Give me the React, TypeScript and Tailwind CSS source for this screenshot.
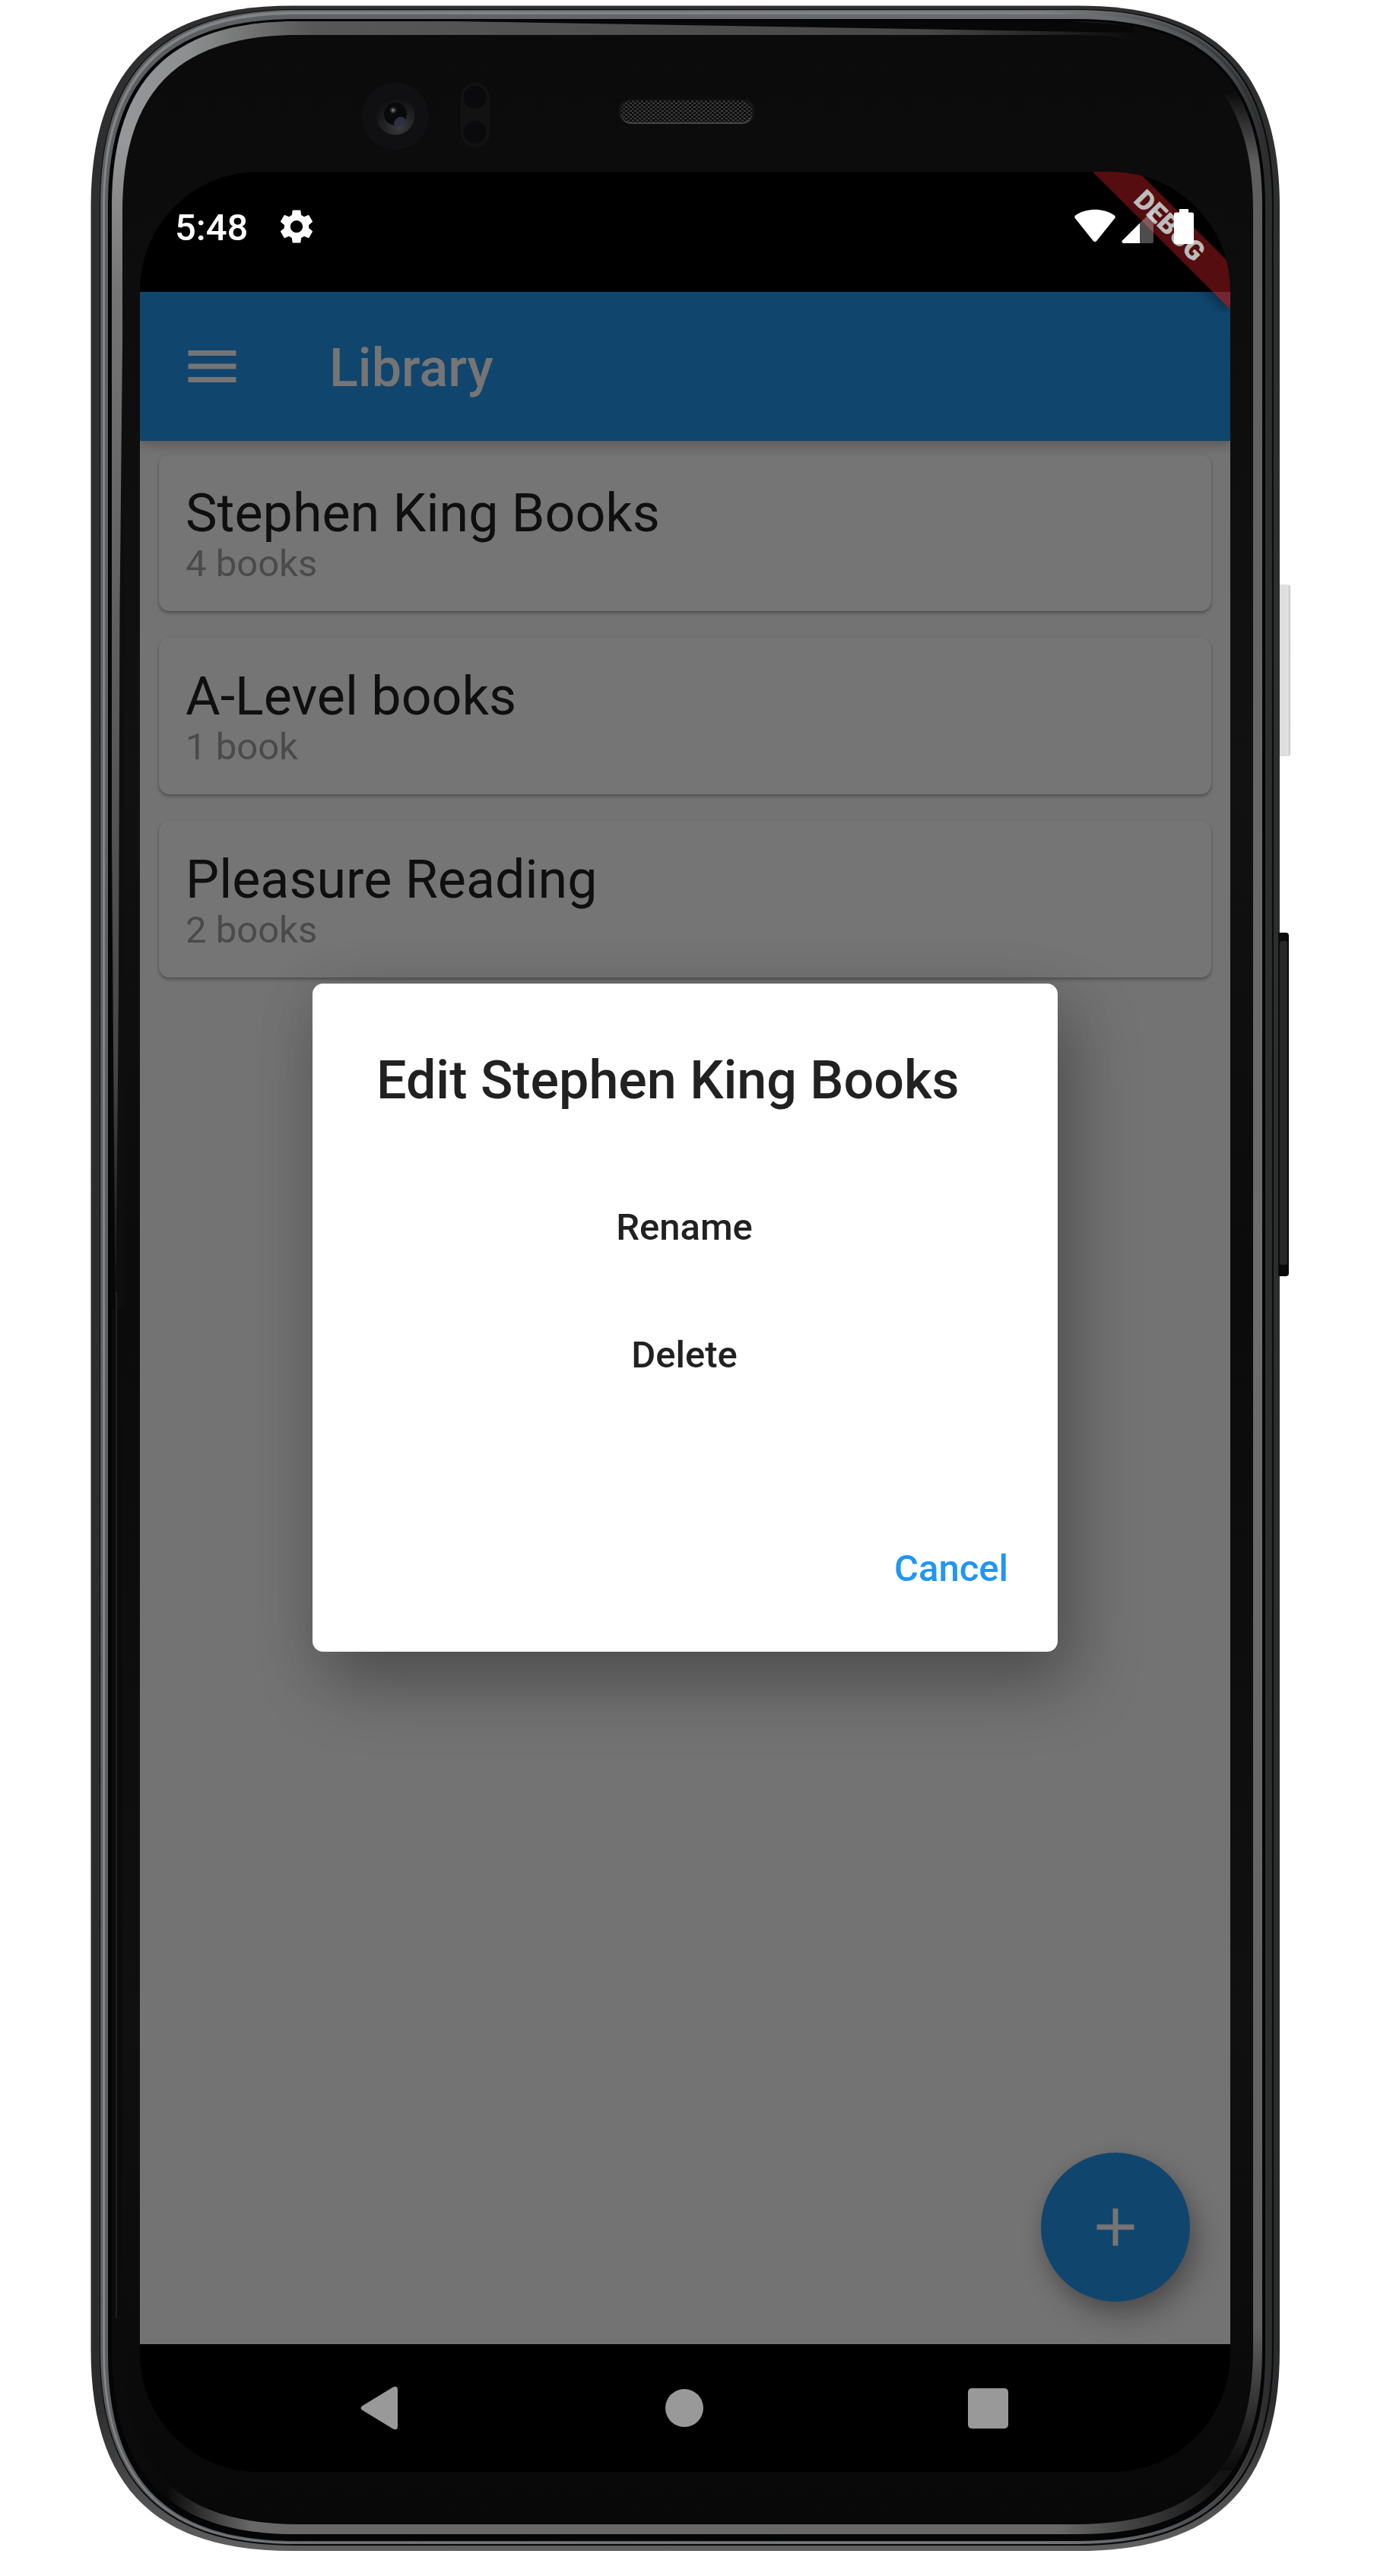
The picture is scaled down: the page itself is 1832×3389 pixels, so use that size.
import { MdSettings, MdMenu, MdAdd } from "react-icons/md";

function rr(l: number, t: number, r: number, b: number, s: number) {
  const k = s * 0.318;
  return `M${l} ${t + s}C${l} ${t + k} ${l + k} ${t} ${l + s} ${t}H${r - s}C${r - k} ${t} ${r} ${t + k} ${r} ${t + s}V${b - s}C${r} ${b - k} ${r - k} ${b} ${r - s} ${b}H${l + s}C${l + k} ${b} ${l} ${b - k} ${l} ${b - s}Z`;
}

function DeviceFrame() {
  return (
    <svg className="absolute left-0 top-0" width="1832" height="3389" viewBox="0 0 1832 3389">
      <defs>
        <linearGradient id="rim" x1="0" y1="0" x2="0" y2="1">
          <stop offset="0" stopColor="#2f2f2f" />
          <stop offset="0.94" stopColor="#2b2b2b" />
          <stop offset="1" stopColor="#606060" />
        </linearGradient>
        <linearGradient id="band" gradientUnits="userSpaceOnUse" x1="118" y1="0" x2="1683" y2="0">
          <stop offset="0" stopColor="#5c5e61" />
          <stop offset="0.85" stopColor="#6b6d70" />
          <stop offset="0.95" stopColor="#4a4c4e" />
          <stop offset="0.99" stopColor="#2a2c2e" />
        </linearGradient>
        <linearGradient id="bandCore" gradientUnits="userSpaceOnUse" x1="118" y1="0" x2="1683" y2="0">
          <stop offset="0" stopColor="#828588" />
          <stop offset="0.8" stopColor="#7f8285" />
          <stop offset="0.97" stopColor="#2f3133" />
          <stop offset="1" stopColor="#2b2d2f" />
        </linearGradient>
        <linearGradient id="glass" x1="0" y1="0" x2="0" y2="1">
          <stop offset="0" stopColor="#0b0b0b" />
          <stop offset="0.3" stopColor="#111111" />
          <stop offset="0.5" stopColor="#0b0b0b" />
          <stop offset="0.8" stopColor="#101010" />
          <stop offset="1" stopColor="#080808" />
        </linearGradient>
        <linearGradient id="bevelTop" gradientUnits="userSpaceOnUse" x1="140" y1="0" x2="1490" y2="0">
          <stop offset="0" stopColor="#98999a" />
          <stop offset="0.08" stopColor="#8d8e8f" />
          <stop offset="0.2" stopColor="#575757" />
          <stop offset="0.8" stopColor="#474747" />
          <stop offset="1" stopColor="#0b0b0b" />
        </linearGradient>
        <linearGradient id="bevelLeft" gradientUnits="userSpaceOnUse" x1="0" y1="180" x2="0" y2="1720">
          <stop offset="0" stopColor="#98999a" />
          <stop offset="0.13" stopColor="#747474" />
          <stop offset="0.5" stopColor="#5a5a5a" />
          <stop offset="0.8" stopColor="#444" />
          <stop offset="1" stopColor="#101010" />
        </linearGradient>
        <linearGradient id="bevelRight" gradientUnits="userSpaceOnUse" x1="0" y1="120" x2="0" y2="3250">
          <stop offset="0" stopColor="#0b0b0b" />
          <stop offset="0.03" stopColor="#5e5e5e" />
          <stop offset="0.5" stopColor="#6e6e6e" />
          <stop offset="0.94" stopColor="#606060" />
          <stop offset="1" stopColor="#0b0b0b" />
        </linearGradient>
        <linearGradient id="bevelBottom" gradientUnits="userSpaceOnUse" x1="220" y1="0" x2="1600" y2="0">
          <stop offset="0" stopColor="#0a0a0a" />
          <stop offset="0.08" stopColor="#686868" />
          <stop offset="0.85" stopColor="#686868" />
          <stop offset="1" stopColor="#141414" />
        </linearGradient>
        <linearGradient id="whiteKey" x1="0" y1="0" x2="1" y2="0">
          <stop offset="0" stopColor="#f4f4f4" />
          <stop offset="0.3" stopColor="#dcdcdc" />
          <stop offset="0.8" stopColor="#e2e2e1" />
          <stop offset="1" stopColor="#c4c4c4" />
        </linearGradient>
        <radialGradient id="lens" cx="0.6" cy="0.8" r="0.8">
          <stop offset="0" stopColor="#3a3b3d" />
          <stop offset="0.5" stopColor="#222224" />
          <stop offset="1" stopColor="#0d0d0f" />
        </radialGradient>
        <radialGradient id="glint">
          <stop offset="0" stopColor="#9a9a9a" />
          <stop offset="1" stopColor="#0a0a0c" stopOpacity="0" />
        </radialGradient>
        <pattern id="mesh" width="6" height="5" patternUnits="userSpaceOnUse">
          <rect width="6" height="5" fill="#0d0d0d" />
          <path d="M0 0h3v2h-3zM3 2.5h3v2h-3z" fill="#3c3c3c" />
        </pattern>
        <clipPath id="clipTop">
          <path d="M100 0H1500V181H100Z" />
        </clipPath>
        <clipPath id="clipLeft">
          <path d="M100 180H300V1720H100Z" />
        </clipPath>
        <clipPath id="clipRight">
          <path d="M1500 100H1700V3250H1500Z" />
        </clipPath>
        <clipPath id="clipBottom">
          <path d="M180 3250H1700V3400H180Z" />
        </clipPath>
      </defs>

      {/* side keys */}
      <rect x="1679" y="769" width="18" height="226" rx="4" fill="url(#whiteKey)" />
      <rect x="1678" y="1227" width="17" height="452" rx="4" fill="#0a0a0a" />

      {/* outer shell */}
      <path d={rr(119.5, 7.5, 1683, 3356, 265)} fill="url(#rim)" />
      <path d={rr(131, 12, 1675, 3349, 258)} fill="#0a0a0a" />
      <path d={rr(132, 13, 1673, 3347, 257)} fill="url(#band)" />
      <path d={rr(135, 15, 1670, 3346, 255)} fill="url(#bandCore)" />
      <path d={rr(138, 19, 1668, 3345, 252)} fill="url(#band)" />
      <path d={rr(142, 25, 1664, 3343, 247)} fill="#050505" />
      <rect x="1681" y="1227" width="2.500" height="452" fill="#0a0a0a" />
      <rect x="1683" y="1238" width="10" height="426" rx="3" fill="#282828" />

      {/* glass bevel */}
      <path d={rr(147, 28, 1660, 3334, 243)} fill="#0b0b0b" />
      <path d={rr(147, 28, 1660, 3334, 243)} fill="url(#bevelLeft)" clipPath="url(#clipLeft)" />
      <path d={rr(147, 28, 1660, 3334, 243)} fill="url(#bevelTop)" clipPath="url(#clipTop)" />
      <path d="M600 28H1410L1490 34V43Z" fill="#070707" />
      <path d={rr(147, 28, 1660, 3334, 243)} fill="url(#bevelRight)" clipPath="url(#clipRight)" />
      <path d={rr(147, 28, 1660, 3334, 243)} fill="url(#bevelBottom)" clipPath="url(#clipBottom)" />
      <path d={rr(161, 46, 1648, 3321, 232)} fill="url(#glass)" />
      <path d="M162 350L157.500 800L156 1300L152.500 1722H164V350Z" fill="#0e0e0e" />
      <path d="M146 500L147 1100L151.500 1722H146Z" fill="#070707" />
      <path d="M153 1700V3050" stroke="#1f1f1f" strokeWidth="2" />

      {/* front camera */}
      <circle cx="520" cy="153" r="44" fill="#101012" />
      <circle cx="520" cy="152" r="25.5" fill="url(#lens)" />
      <circle cx="520" cy="150" r="15" fill="#09090b" />
      <circle cx="517" cy="145" r="6" fill="url(#glint)" />
      <ellipse cx="525.5" cy="160" rx="8" ry="5.500" fill="#2a3048" transform="rotate(-30 525.5 160)" />

      {/* proximity sensors */}
      <rect x="606" y="109" width="38" height="85" rx="19" fill="#121213" />
      <circle cx="624.5" cy="128" r="15" fill="#0a0a0c" />
      <circle cx="624.5" cy="174" r="15" fill="#0a0a0c" />

      {/* earpiece */}
      <rect x="814" y="131" width="178" height="32" rx="14" fill="#161616" />
      <rect x="817" y="134" width="172" height="29" rx="13" fill="#444" />
      <rect x="817" y="133" width="172" height="28" rx="13" fill="url(#mesh)" />
    </svg>
  );
}

function StatusBar() {
  return (
    <div className="relative z-30 flex h-[158px] shrink-0 items-start justify-between pl-[46px] pr-[48px] pt-[49px]">
      <div className="flex items-start">
        <span className="mt-[-3px] w-[133px] text-[49px] leading-[56px] font-medium text-white">5:48</span>
        <MdSettings className="mt-[-4px] size-[54px] text-white" />
      </div>
      <div className="flex items-start">
        <svg width="54" height="46" viewBox="0 0 54 46" className="mr-[8px] fill-white">
          <path d="M1.6 13C-.4 11.200-.2 9.600 1.800 8C17-1.600 37-1.600 52.200 8C54.200 9.600 54.400 11.200 52.400 13L29.200 42C27.800 43.500 26.200 43.500 24.800 42Z" />
        </svg>
        <svg width="42" height="46" viewBox="0 0 42 46" className="mr-[27px] fill-white">
          <path d="M24 18.500V45H2.500Q-1 44 1 41.500Z" />
          <path d="M24 18.500L42 1V43Q42 45 40 45H24Z" fillOpacity="0.3" />
        </svg>
        <svg width="26" height="46" viewBox="0 0 26 46" className="fill-white">
          <path d="M7 0H19V4.500H23.500Q26 4.500 26 7V43.500Q26 46 23.500 46H2.500Q0 46 0 43.500V7Q0 4.500 2.500 4.500H7Z" />
        </svg>
      </div>
    </div>
  );
}

function DebugBanner() {
  return (
    <svg width="184" height="184" viewBox="0 0 184 184" className="absolute right-0 top-0 z-20">
      <defs>
        <filter id="soft">
          <feGaussianBlur stdDeviation="7" />
        </filter>
        <clipPath id="below">
          <rect x="0" y="158" width="184" height="40" />
        </clipPath>
      </defs>
      <g clipPath="url(#below)">
        <path d="M100 106L184 190V130Z" fill="#000" fillOpacity="0.3" filter="url(#soft)" />
      </g>
      <path d="M3 0H63L184 121V158H161Z" fill="#560d0f" />
      <path d="M161 158H184V181Z" fill="#772431" />
      <text
        x="104"
        y="71"
        textAnchor="middle"
        dominantBaseline="central"
        transform="rotate(45 104 71)"
        className="fill-[#bcbcbc] text-[35.700px] font-black"
      >
        DEBUG
      </text>
    </svg>
  );
}

const lists = [
  { name: "Stephen King Books", count: "4 books" },
  { name: "A-Level books", count: "1 book" },
  { name: "Pleasure Reading", count: "2 books" },
];

export default function App() {
  return (
    <div className="relative h-[3389px] w-[1832px] overflow-hidden bg-white pt-[226px] pl-[184px] font-['Roboto',sans-serif]">
      <DeviceFrame />
      <div className="relative flex h-[3026px] w-[1434px] flex-col overflow-hidden rounded-[156px] bg-black">
        <DebugBanner />
        <StatusBar />

        <header className="relative z-10 flex h-[196px] shrink-0 items-center bg-[#10456e] pl-[53px] shadow-[0_5px_14px_rgba(0,0,0,0.24)]">
          <MdMenu className="size-[84px] text-[#757575]" />
          <h1 className="ml-[112px] pt-[4px] text-[70px] leading-[82px] font-medium text-[#757575]">Library</h1>
        </header>

        <main className="relative flex grow flex-col gap-[35px] bg-[#737373] px-[25px] pt-[18px]">
          {lists.map((list) => (
            <section
              key={list.name}
              className="h-[206px] rounded-[14px] bg-[#757575] pt-[36px] pl-[35px] shadow-[0_3px_4px_rgba(0,0,0,0.24),0_1px_3px_rgba(0,0,0,0.12)]"
            >
              <h2 className="text-[70px] leading-[82px] text-[#0f0f0f]">{list.name}</h2>
              <p className="mt-[-3px] text-[49px] leading-[57px] text-[#4a4a4a]">{list.count}</p>
            </section>
          ))}

          <button className="absolute bottom-[56px] right-[53px] flex size-[196px] items-center justify-center rounded-full bg-[#10456e] shadow-[10px_20px_36px_rgba(0,0,0,0.28),0_4px_22px_rgba(0,0,0,0.1)]">
            <MdAdd className="size-[84px] text-[#757575]" />
          </button>
        </main>

        <nav className="flex h-[168px] shrink-0 items-center justify-between bg-black pl-[290px] pr-[292px]">
          <svg width="49" height="58" viewBox="0 0 49 58" className="fill-[#999]">
            <path d="M43 1.500Q49 -1 49 5V53Q49 59 43 56.500L2 31.500Q-1 29 2 26.500Z" />
          </svg>
          <span className="ml-[4px] size-[50px] rounded-full bg-[#999]" />
          <span className="size-[53px] rounded-[5px] bg-[#999]" />
        </nav>

        {/* dialog */}
        <div
          role="dialog"
          className="absolute left-[227px] top-[1068px] z-40 flex h-[879px] w-[980px] flex-col rounded-[14px] bg-white px-[84px] pt-[86px] text-[#212121] shadow-[20px_44px_90px_rgba(0,0,0,0.28),0_10px_80px_rgba(0,0,0,0.1)]"
        >
          <h2 className="text-[70px] leading-[82px] font-medium whitespace-nowrap">Edit Stephen King Books</h2>
          <div className="mt-[124px] mr-[2px] flex flex-col items-center gap-[111px] text-[49px] leading-[57px] font-medium">
            <button>Rename</button>
            <button>Delete</button>
          </div>
          <button className="mt-[224px] mr-[-19px] self-end text-[49px] leading-[57px] font-medium text-[#2196f3]">
            Cancel
          </button>
        </div>
      </div>
    </div>
  );
}
